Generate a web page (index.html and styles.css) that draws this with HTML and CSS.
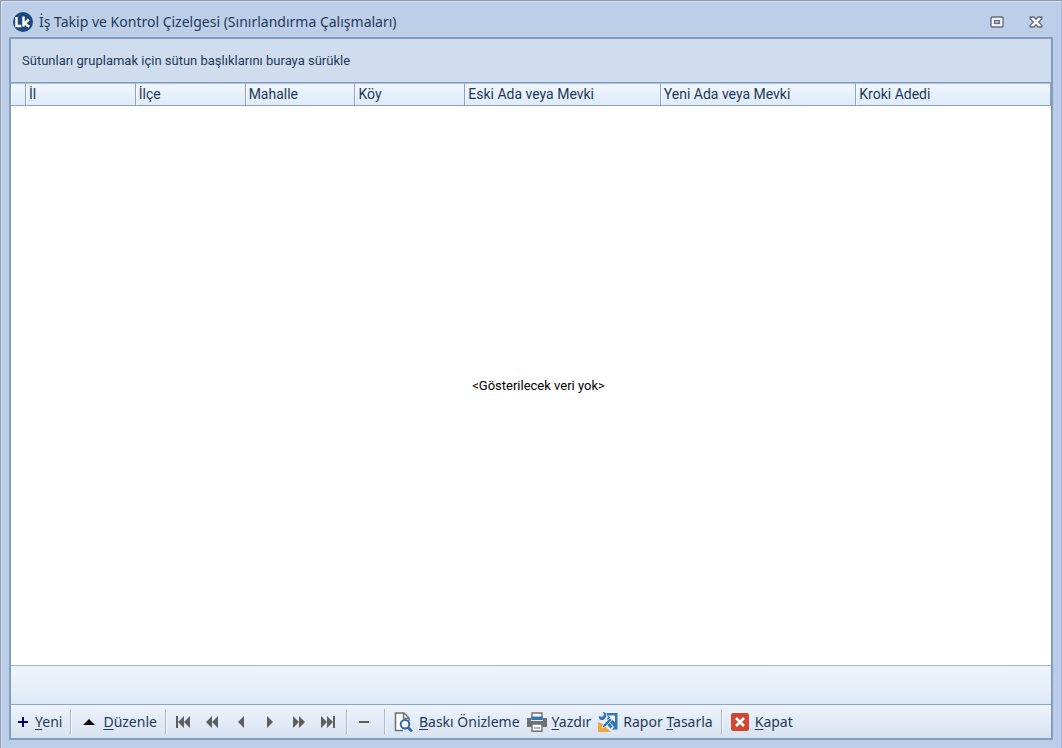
FILE: index.html
```html
<!DOCTYPE html>
<html lang="tr">
<head>
<meta charset="utf-8">
<title>İş Takip ve Kontrol Çizelgesi</title>
<link rel="stylesheet" href="styles.css">
</head>
<body>
<div class="window">
  <header class="titlebar">
    <svg class="logo" viewBox="0 0 20 20" width="20" height="20" aria-hidden="true"><circle cx="10" cy="10" r="10" fill="#1c477f"/><path d="M3.500 5v9h4.800M10.500 4.500v10M15.800 7.500l-4.200 3.800 4.600 3.500" fill="none" stroke="#fff" stroke-width="2.500"/></svg>
    <h1 class="title">İş Takip ve Kontrol Çizelgesi (Sınırlandırma Çalışmaları)</h1>
    <button class="winbtn" aria-label="Ekranı kapla"><svg viewBox="0 0 14 12" width="14" height="12"><rect x="1" y="1" width="12" height="10" rx="1" fill="#f4f6fa" stroke="#666b80" stroke-width="1.4"/><rect x="4.5" y="4.5" width="5" height="3" fill="#b5bdce" stroke="#666b80" stroke-width="1.2"/></svg></button>
    <button class="winbtn" aria-label="Pencereyi kapat"><svg viewBox="0 0 14 12" width="14" height="12"><path d="M1 1h4l2 2.300L9 1h4v1.600L9.700 6 13 9.400V11H9L7 8.700 5 11H1V9.400L4.300 6 1 2.600z" fill="#f4f6fa" stroke="#666b80" stroke-width="1.3" stroke-linejoin="round"/></svg></button>
  </header>
  <main class="frame">
    <div class="grouppanel">Sütunları gruplamak için sütun başlıklarını buraya sürükle</div>
    <table class="grid">
      <colgroup><col class="c-ind"><col class="c-s"><col class="c-s"><col class="c-s"><col class="c-s"><col class="c-l"><col class="c-l"><col></colgroup>
      <thead>
        <tr><th></th><th>İl</th><th>İlçe</th><th>Mahalle</th><th>Köy</th><th>Eski Ada veya Mevki</th><th>Yeni Ada veya Mevki</th><th>Kroki Adedi</th></tr>
      </thead>
      <tbody>
        <tr><td></td><td class="empty" colspan="7">&lt;Gösterilecek veri yok&gt;</td></tr>
      </tbody>
    </table>
    <div class="summary"></div>
    <nav class="toolbar">
      <button class="tool"><svg viewBox="0 0 12 12" width="12" height="12"><path d="M6 1v10M1 6h10" stroke="#00007d" stroke-width="2"/></svg><span><u>Y</u>eni</span></button>
      <i class="sep"></i>
      <button class="tool edit"><svg viewBox="0 0 12 12" width="12" height="12"><path d="M0 9l6-6 6 6z" fill="#000"/></svg><span><u>D</u>üzenle</span></button>
      <i class="sep"></i>
      <div class="navs">
        <button class="navbtn" aria-label="İlk"><svg viewBox="0 0 16 12" width="16" height="12"><path d="M1 0h2v12H1zM9 0v12L3 6zM15 0v12L9 6z"/></svg></button>
        <button class="navbtn" aria-label="Önceki sayfa"><svg viewBox="0 0 16 12" width="16" height="12"><path d="M8 0v12L2 6zM14 0v12L8 6z"/></svg></button>
        <button class="navbtn" aria-label="Önceki"><svg viewBox="0 0 16 12" width="16" height="12"><path d="M11 0v12L5 6z"/></svg></button>
        <button class="navbtn" aria-label="Sonraki"><svg viewBox="0 0 16 12" width="16" height="12"><path d="M5 0v12l6-6z"/></svg></button>
        <button class="navbtn" aria-label="Sonraki sayfa"><svg viewBox="0 0 16 12" width="16" height="12"><path d="M2 0v12l6-6zM8 0v12l6-6z"/></svg></button>
        <button class="navbtn" aria-label="Son"><svg viewBox="0 0 16 12" width="16" height="12"><path d="M1 0v12l6-6zM7 0v12l6-6zM13 0h2v12h-2z"/></svg></button>
      </div>
      <i class="sep"></i>
      <button class="navbtn minus" aria-label="Sil"><svg viewBox="0 0 12 12" width="12" height="12"><path d="M1 5h10v2H1z"/></svg></button>
      <i class="sep"></i>
      <div class="reports">
        <button class="tool"><svg viewBox="0 0 20 20" width="20" height="20"><path d="M9 18.500H1.500V1H10l5 5v3" fill="#fff" stroke="#717171" stroke-width="1.500"/><path d="M9.500 1v5.500H15" fill="none" stroke="#717171" stroke-width="1.400"/><circle cx="11" cy="12.300" r="4.300" fill="#fff" stroke="#2869ad" stroke-width="2"/><path d="M14 15.500l4 4" stroke="#2869ad" stroke-width="2.500"/></svg><span><u>B</u>askı Önizleme</span></button>
        <button class="tool"><svg viewBox="0 0 20 20" width="20" height="20"><path d="M5 7V1h10v6" fill="#fff" stroke="#717171" stroke-width="1.400"/><path d="M0 6h4v3h12V6h4v9H0z" fill="#717171"/><path d="M4.300 4.500h11.400V8H4.300z" fill="#3477b8"/><path d="M5 12h10v7.300H5z" fill="#fff" stroke="#717171" stroke-width="1.400"/><path d="M7 16h6" stroke="#3477b8"/></svg><span><u>Y</u>azdır</span></button>
        <button class="tool"><svg viewBox="0 0 20 20" width="20" height="20"><path d="M0 7v13h13z" fill="#eda83c"/><path d="M4 1h15.500v16.500H13L4 9z" fill="#3477b8"/><path d="M10 3.500h7v7z" fill="#fff"/><path d="M2 0h6l2 5-1 2 7 8-3 4-8-7-5-2V4z" fill="#e6eef8"/><path d="M1 4l3 1 2-2-1-3c3 0 4 3 3 5l-2 2.500C3 9 0 7 1 4z" fill="#3477b8"/><path d="M9.500 9l5 5.500-2 2-5-5.500z" fill="#3477b8"/><path d="M4 16l1-3 7-7 2 2-7 7z" fill="#3477b8" stroke="#e6eef8" stroke-width=".8"/></svg><span>Rapor <u>T</u>asarla</span></button>
      </div>
      <i class="sep"></i>
      <button class="tool"><svg viewBox="0 0 18 18" width="18" height="18"><rect width="18" height="18" rx="2" fill="#cf4932"/><path d="M5 5l8 8M13 5l-8 8" stroke="#fff" stroke-width="2.600"/></svg><span><u>K</u>apat</span></button>
    </nav>
  </main>
</div>
</body>
</html>
```
FILE: styles.css
```css
* { box-sizing: border-box; }
body { margin: 0; }
button { border: 0; background: none; padding: 0; font: inherit; color: inherit; }
svg { display: block; flex: none; }

.window {
  display: flex;
  flex-direction: column;
  min-height: 100vh;
  padding: 0 8px 8px;
  border: 1px solid #8e98af;
  border-right-color: #a9bbd8;
  border-bottom: 0;
  background: #bdcfe8;
  box-shadow: inset 1px 1px 0 #d4e1f2;
  color: #1e395b;
}
.titlebar {
  display: flex;
  align-items: center;
  height: 36px;
  padding: 5px 10px 0 4px;
}
.title {
  flex: 1;
  margin: 0 0 0 6px;
  font: 14px "Noto Sans", "Open Sans", sans-serif;
}
.winbtn { margin-left: 25px; }

.frame {
  flex: 1;
  display: flex;
  flex-direction: column;
  border: 2px solid #829ebf;
  background: #fff;
}
.grouppanel {
  padding: 13px 11px 12px;
  border-bottom: 1px solid #829ebf;
  background: #cfddee;
  font: 13px/18px Roboto, sans-serif;
}
.grid {
  flex: 1;
  width: 100%;
  height: 100%;
  table-layout: fixed;
  border-collapse: separate;
  border-spacing: 0;
  font: 13px/18px Roboto, sans-serif;
}
.c-ind { width: 15px; }
.c-s { width: 10.56%; }
.c-l { width: 18.8%; }
.grid th {
  height: 23px;
  padding: 1px 3px 2px;
  border-right: 1px solid #8ba5c6;
  border-bottom: 1px solid #8ba5c6;
  border-top: 1px solid #aebfd7;
  background: linear-gradient(#f0f6fc, #dfebf9);
  box-shadow: inset 1px 0 0 #f6faff;
  font-size: 14px;
  font-weight: 400;
  text-align: left;
}
.grid td { padding: 0; }
.grid .empty { text-align: center; vertical-align: middle; color: #000; }
.summary {
  height: 39px;
  border-top: 1px solid #9fb6d2;
  background: linear-gradient(#eef4fc, #e6eef9 60%, #dce9f7);
}
.toolbar {
  display: flex;
  align-items: center;
  height: 34px;
  padding: 0 6px;
  border-top: 1px solid #8ba5c6;
  background: linear-gradient(#edf3fc, #d8e3f1);
  font: 14px/20px "Noto Sans", "Open Sans", sans-serif;
  white-space: nowrap;
}
.tool { display: flex; align-items: center; gap: 6px; }
.tool u { text-underline-offset: 2px; }
.edit { gap: 8px; padding-left: 3px; }
.sep {
  width: 2px;
  height: 26px;
  margin: 0 8px;
  background: linear-gradient(90deg, #a9bad2 50%, #f7faff 50%);
}
.navs { display: flex; gap: 13px; padding-right: 2px; }
.navbtn { fill: #5f5f5f; }
.minus { padding: 0 6px 0 2px; }
.reports { display: flex; gap: 7px; }
.reports .tool { gap: 5px; }
```
